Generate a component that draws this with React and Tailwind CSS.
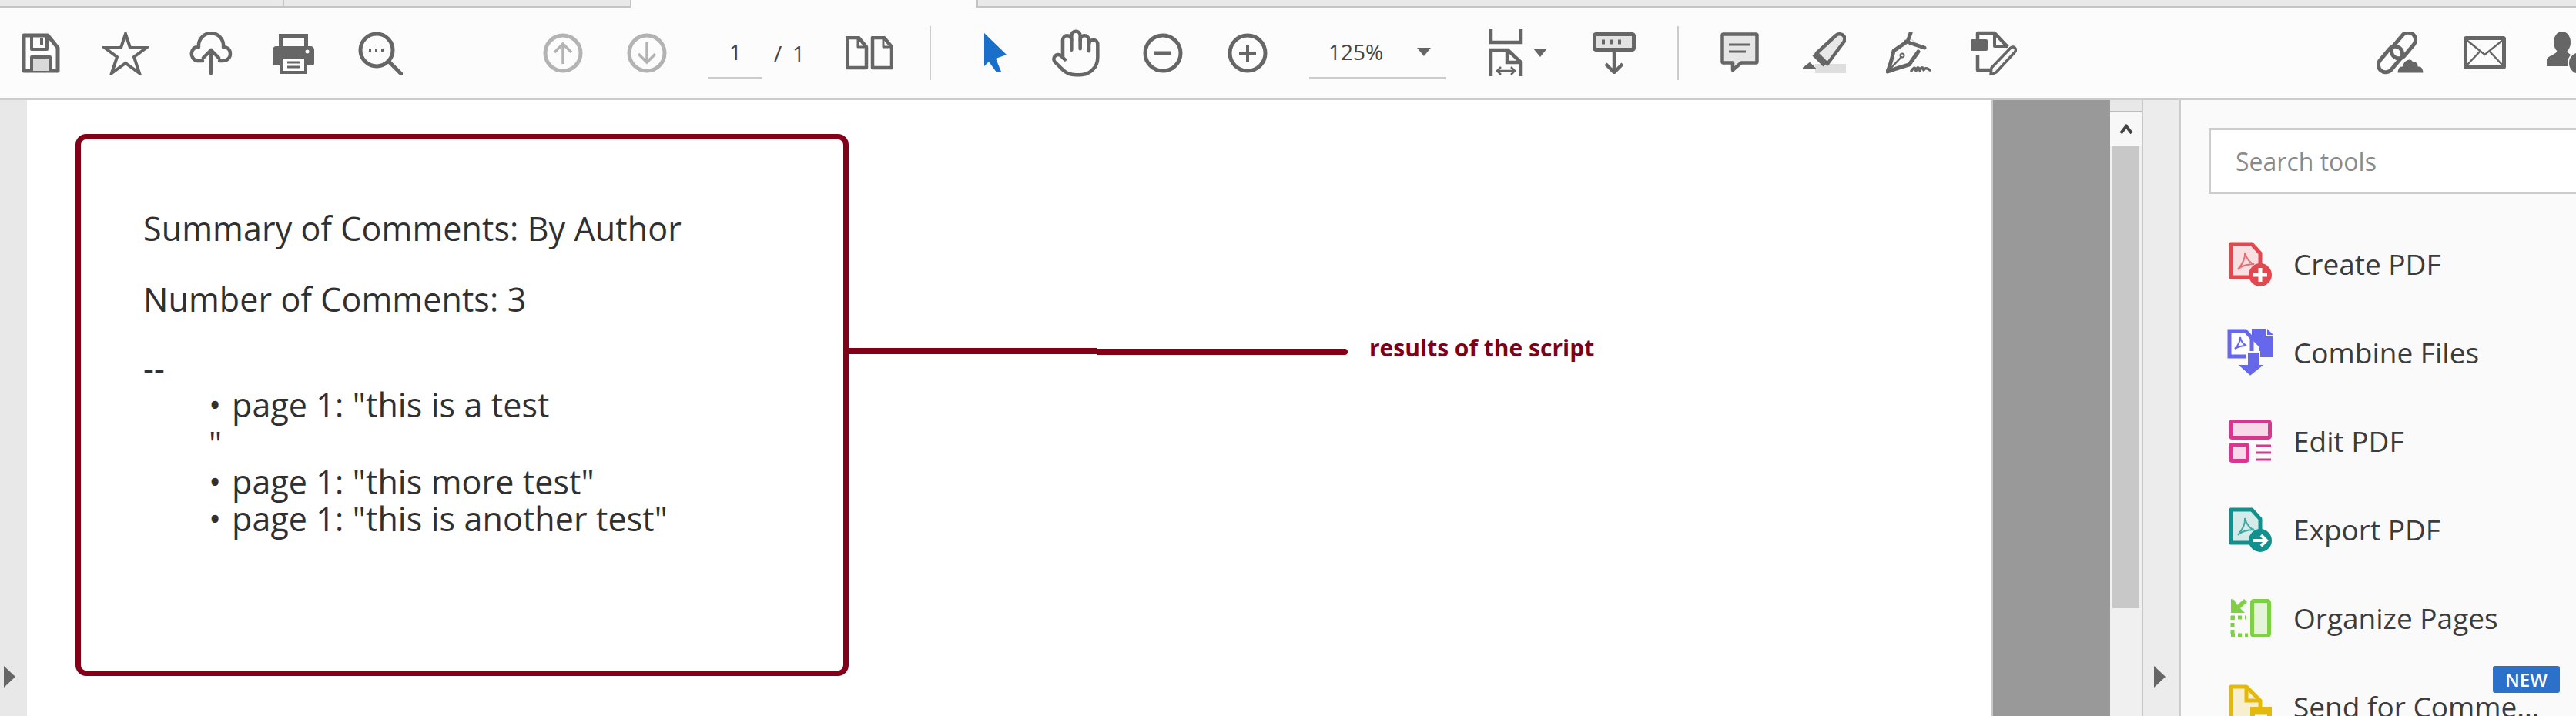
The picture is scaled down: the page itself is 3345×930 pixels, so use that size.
import React from "react";
import { Hand } from "lucide-react";

const GRAY = "#666666";

function SaveIcon({ className }) {
  return (
    <svg className={className} width="50" height="52" viewBox="0 0 50 52" fill="none" stroke={GRAY} strokeWidth="5" strokeLinejoin="round">
      <path d="M3 3H34L47 19V49H3Z" />
      <path d="M13 3V21H33V3" strokeWidth="4" />
      <path d="M26 6V15" strokeWidth="4" />
      <path d="M13 49V31H37V49" fill="#d9d9d9" strokeWidth="4" />
    </svg>
  );
}

function StarIcon({ className }) {
  return (
    <svg className={className} width="60" height="56" viewBox="0 0 60 56" fill="none" stroke={GRAY} strokeWidth="4" strokeLinejoin="miter">
      <path d="M30 3L36 21H57L41 33L48 54L30 41L12 54L19 33L3 21H24Z" />
    </svg>
  );
}

function CloudUpIcon({ className }) {
  return (
    <svg className={className} width="56" height="56" viewBox="0 0 56 56" fill="none" stroke={GRAY} strokeWidth="4.5" strokeLinecap="round" strokeLinejoin="round">
      <path d="M17 38H12C5 38 2 32 3 27C4 22 8 20 12 20C11 10 19 2 28 2C37 2 45 10 44 20C49 20 53 23 53 29C53 34 49 38 43 38H39" />
      <path d="M28 54V24M18 34L28 24L38 34" />
    </svg>
  );
}

function PrintIcon({ className }) {
  return (
    <svg className={className} width="56" height="54" viewBox="0 0 56 54">
      <path d="M9 2H47V18H42V7H14V18H9Z" fill={GRAY} />
      <path d="M6 18H50C53 18 55 20 55 23V40C55 42 54 43 52 43H46V30H10V43H4C2 43 1 42 1 40V23C1 20 3 18 6 18Z" fill={GRAY} />
      <rect x="12" y="32" width="32" height="20" fill="#fff" stroke={GRAY} strokeWidth="4" />
      <path d="M20 39H36M20 45H36" stroke={GRAY} strokeWidth="3" />
      <circle cx="46" cy="25" r="2.5" fill="#fff" />
    </svg>
  );
}

function FindIcon({ className }) {
  return (
    <svg className={className} width="58" height="56" viewBox="0 0 58 56" fill="none" stroke={GRAY}>
      <circle cx="24" cy="24" r="21" strokeWidth="5" />
      <path d="M40 39L56 55" strokeWidth="5" strokeLinecap="round" />
      <path d="M14 24H34" strokeWidth="4" strokeDasharray="3 5" />
    </svg>
  );
}

function ArrowCircle({ className, down }) {
  return (
    <svg className={className} width="52" height="52" viewBox="0 0 52 52" fill="none" stroke="#b3b3b3" strokeWidth="5">
      <circle cx="26" cy="26" r="23" />
      {down ? <path d="M26 12V38M15 27L26 38L37 27" strokeWidth="3.5" /> : <path d="M26 40V14M15 25L26 14L37 25" strokeWidth="3.5" />}
    </svg>
  );
}

function PagesIcon({ className }) {
  const page = (x) => `M${x + 2} 2H${x + 17}L${x + 27} 14V41H${x + 2}Z`;
  return (
    <svg className={className} width="62" height="44" viewBox="0 0 62 44" fill="none" stroke={GRAY} strokeWidth="4.5" strokeLinejoin="round">
      <path d={page(0)} />
      <path d="M16 3V14H27" strokeWidth="3" />
      <path d={page(33)} />
      <path d="M49 3V14H60" strokeWidth="3" />
    </svg>
  );
}

function Separator({ className }) {
  return <div className={`w-[2px] h-[70px] bg-[#cccccc] ${className}`} />;
}

function CursorIcon({ className }) {
  return (
    <svg className={className} width="30" height="52" viewBox="0 0 30 52">
      <path d="M0 0L29 28L15 33L22 50L16 51L6 37L0 43Z" fill="#1a6fcb" />
    </svg>
  );
}

function CircleSign({ className, plus }) {
  return (
    <svg className={className} width="52" height="52" viewBox="0 0 52 52" fill="none" stroke={GRAY} strokeWidth="5">
      <circle cx="26" cy="26" r="23" />
      <path d={plus ? "M15 26H37M26 15V37" : "M15 26H37"} strokeWidth={plus ? 4 : 5} />
    </svg>
  );
}

function FitIcon({ className }) {
  return (
    <svg className={className} width="45" height="61" viewBox="0 0 45 61" fill="none" stroke={GRAY} strokeWidth="4.5">
      <path d="M3 0V17H42V0" />
      <path d="M3 61V27H25L42 43V61" />
      <path d="M24 27V43H42" />
      <path d="M11 54H34M16 49L11 54L16 59M29 49L34 54L29 59" strokeWidth="2.5" />
    </svg>
  );
}

function Caret({ className, w = 18, h = 11 }) {
  return (
    <svg className={className} width={w} height={h} viewBox="0 0 18 11">
      <path d="M0 0H18L9 11Z" fill={GRAY} />
    </svg>
  );
}

function PageOutIcon({ className }) {
  return (
    <svg className={className} width="56" height="54" viewBox="0 0 56 54" fill="none" stroke={GRAY}>
      <rect x="2.5" y="2.5" width="51" height="20" rx="2" fill="#e2e2e2" strokeWidth="5" />
      <path d="M12 12.5H44" strokeWidth="6" strokeDasharray="4 6.5" />
      <path d="M28 26V52M17 41L28 52L39 41" strokeWidth="4.5" />
    </svg>
  );
}

function CommentIcon({ className }) {
  return (
    <svg className={className} width="50" height="53" viewBox="0 0 50 53" fill="none" stroke={GRAY} strokeWidth="4.5" strokeLinejoin="round">
      <path d="M4 2.5H46C47 2.5 47.5 3 47.5 4V38C47.5 39 47 39.5 46 39.5H27L16 49V39.5H4C3 39.5 2.5 39 2.5 38V4C2.5 3 3 2.5 4 2.5Z" fill="#e6e6e6" />
      <path d="M11 16H39M11 25H33" strokeWidth="3" />
    </svg>
  );
}

function HighlightIcon({ className }) {
  return (
    <svg className={className} width="56" height="54" viewBox="0 0 56 54" fill="none" stroke={GRAY} strokeLinejoin="round">
      <rect x="16" y="41" width="40" height="12" fill="#dedede" stroke="none" />
      <path d="M18 27L43 4C46 1 52 2 54 6C55 9 54 12 52 14L32 41L18 27Z" fill="#e8e8e8" strokeWidth="4.5" />
      <path d="M15 28L29 42" strokeWidth="7" />
      <path d="M9 40L16 47H0Z" fill={GRAY} stroke={GRAY} strokeWidth="2" />
    </svg>
  );
}

function SignIcon({ className }) {
  return (
    <svg className={className} width="58" height="54" viewBox="0 0 58 54" fill="none" stroke={GRAY} strokeWidth="5" strokeLinejoin="round" strokeLinecap="round">
      <path d="M33 8L51 22L36 18Z" fill="#dedede" stroke="none" />
      <path d="M32 1L28 12M26 12L50 20" strokeWidth="5" />
      <path d="M26 13L10 24C8 33 6 42 2 51C11 48 22 44 30 42L42 25" fill="#fafafa" />
      <path d="M3 50L20 32" strokeWidth="2.5" />
      <circle cx="21" cy="30" r="2.5" strokeWidth="2" />
      <path d="M33 50C37 44 38 46 39 50C41 44 43 45 44 50C46 44 48 45 49 49C51 45 54 47 57 49" strokeWidth="3.5" />
    </svg>
  );
}

function DocPenIcon({ className }) {
  return (
    <svg className={className} width="60" height="58" viewBox="0 0 60 58" fill="none" stroke={GRAY} strokeWidth="4.5" strokeLinejoin="round">
      <path d="M9 15V3H31L48 21" />
      <path d="M31 3V20H48" strokeWidth="4" />
      <rect x="0" y="11" width="22" height="15" rx="2" fill={GRAY} stroke="none" />
      <path d="M9 32V51H27" />
      <path d="M27 48L52 22C54 20 57 21 58 23C59 25 59 26 57 28L33 54L26 57Z" fill="#fafafa" strokeWidth="3.5" />
    </svg>
  );
}

function LinkCloudIcon({ className }) {
  return (
    <svg className={className} width="62" height="56" viewBox="0 0 62 56" fill="none" stroke={GRAY} strokeWidth="5">
      <rect x="-19" y="-9.5" width="38" height="19" rx="9.5" transform="translate(34 18) rotate(-50)" />
      <rect x="-19" y="-9.5" width="38" height="19" rx="9.5" transform="translate(17 36) rotate(-50)" />
      <path d="M26 55C24 55 25 44 32 44C33 36 43 32 47 38C52 38 54 41 54 44C58 44 61 48 61 55Z" fill={GRAY} stroke="#fcfcfc" strokeWidth="3" />
    </svg>
  );
}

function MailIcon({ className }) {
  return (
    <svg className={className} width="55" height="43" viewBox="0 0 55 43" fill="none" stroke={GRAY}>
      <rect x="2.5" y="2.5" width="50" height="38" rx="1" strokeWidth="5" />
      <path d="M4 5L27.5 24L51 5M4 38L21 20M51 38L34 20" strokeWidth="2.5" />
    </svg>
  );
}

function PersonIcon({ className }) {
  return (
    <svg className={`shrink-0 ${className}`} width="58" height="56" viewBox="0 0 58 56" fill={GRAY}>
      <ellipse cx="20" cy="14" rx="11" ry="14" />
      <path d="M14 24H26C27 30 36 31 38 36V45H0V36C2 31 13 30 14 24Z" />
      <circle cx="43" cy="41" r="15" stroke="#fcfcfc" strokeWidth="2" />
    </svg>
  );
}

function CreateIcon() {
  return (
    <svg width="56" height="58" viewBox="0 0 56 58" fill="none">
      <path d="M3 3H30L41 15V46H3Z" fill="#f8dfe1" stroke="#e34850" strokeWidth="5" strokeLinejoin="round" />
      <path d="M12 36C17 30 22 22 21 14C23 22 28 28 33 29C26 29 18 30 12 36Z" stroke="#e34850" strokeWidth="2" opacity=".75" />
      <circle cx="41" cy="43" r="15" fill="#e34850" />
      <path d="M32 43H50M41 34V52" stroke="#fff" strokeWidth="5" />
    </svg>
  );
}

function CombineIcon() {
  return (
    <svg width="60" height="62" viewBox="0 0 60 62" fill="none">
      <path d="M3 3H24L32 12V36H3Z" fill="#fff" stroke="#6767ec" strokeWidth="5" />
      <path d="M10 26C14 22 17 17 17 11C18 17 21 20 25 22C20 22 15 23 10 26Z" stroke="#6767ec" strokeWidth="2" />
      <path d="M32 0H50V10H60V37H42V24L32 14Z" fill="#6767ec" />
      <path d="M52 0L60 8H52Z" fill="#6767ec" />
      <path d="M32 30H42V46H50L30 62L12 46H26V30Z" fill="#6767ec" stroke="#fafafa" strokeWidth="2" />
    </svg>
  );
}

function EditIcon() {
  return (
    <svg width="56" height="56" viewBox="0 0 56 56" fill="none" stroke="#d83790">
      <rect x="2.5" y="2.5" width="51" height="21" rx="2" fill="#f8d9ea" strokeWidth="5" />
      <rect x="2.5" y="32.5" width="22" height="21" rx="2" fill="#f8d9ea" strokeWidth="5" />
      <path d="M36 34H55M36 43H55M36 52H55" strokeWidth="3" />
    </svg>
  );
}

function ExportIcon() {
  return (
    <svg width="56" height="58" viewBox="0 0 56 58" fill="none">
      <path d="M3 3H30L41 15V46H3Z" fill="#d5ebea" stroke="#12908e" strokeWidth="5" strokeLinejoin="round" />
      <path d="M12 36C17 30 22 22 21 14C23 22 28 28 33 29C26 29 18 30 12 36Z" stroke="#12908e" strokeWidth="2" opacity=".75" />
      <circle cx="41" cy="43" r="15" fill="#12908e" />
      <path d="M32 43H48M42 36L49 43L42 50" stroke="#fff" strokeWidth="4" />
    </svg>
  );
}

function OrganizeIcon() {
  return (
    <svg width="54" height="50" viewBox="0 0 54 50" fill="none" stroke="#7ed044">
      <rect x="29.5" y="2.5" width="22" height="45" rx="2" fill="#e5f3da" strokeWidth="5" />
      <path d="M2 24H22M4 22V48M2 47H24" strokeWidth="5" strokeDasharray="5 4" />
      <path d="M2 0V18H20L14 12L23 4L19 0L10 8L6 1Z" fill="#7ed044" stroke="none" />
    </svg>
  );
}

function SendIcon() {
  return (
    <svg width="56" height="58" viewBox="0 0 56 58" fill="none" stroke="#e3b90f">
      <path d="M3 3H23L41 21V58H3Z" fill="#f6efd0" strokeWidth="5" strokeLinejoin="round" />
      <path d="M23 3V21H41" strokeWidth="5" />
      <rect x="28" y="29" width="28" height="29" fill="#e3b90f" stroke="none" />
      <path d="M34 41H50" stroke="#fff" strokeWidth="3" />
    </svg>
  );
}

function ToolRow({ icon, label, badge }) {
  return (
    <div className="relative flex items-center h-[115px] pl-[24px] shrink-0">
      <div className="w-[60px] flex justify-center">{icon}</div>
      <span className="ml-[26px] text-[37px] leading-[37px] text-[#3c3c3c] whitespace-nowrap">{label}</span>
      {badge && (
        <span className="absolute left-[369px] top-[5px] w-[87px] h-[35px] rounded-[3px] bg-[#2b70c9] text-white text-[24px] font-semibold flex items-center justify-center">
          {badge}
        </span>
      )}
    </div>
  );
}

function SideArrow({ className }) {
  return (
    <svg className={className} width="15" height="28" viewBox="0 0 15 28">
      <path d="M0 0L15 14L0 28Z" fill={GRAY} />
    </svg>
  );
}

export default function App() {
  return (
    <div className="w-[3345px] h-[930px] overflow-hidden flex flex-col bg-white font-['Open_Sans',sans-serif]">
      {/* browser tabs */}
      <div className="h-[10px] flex shrink-0">
        <div className="w-[369px] bg-[#e9e9e9] border-b-2 border-[#c4c4c4] border-r-2" />
        <div className="w-[451px] bg-[#e9e9e9] border-b-2 border-[#c4c4c4] border-r-2" />
        <div className="w-[448px] bg-[#fcfcfc]" />
        <div className="flex-1 bg-[#e9e9e9] border-b-2 border-l-2 border-[#c4c4c4]" />
      </div>

      {/* toolbar */}
      <div className="h-[120px] shrink-0 flex items-center bg-[#fcfcfc] border-b-[3px] border-[#cccccc] overflow-hidden">
        <SaveIcon className="ml-[28px] shrink-0" />
        <StarIcon className="ml-[55px] shrink-0" />
        <CloudUpIcon className="ml-[53px] shrink-0" />
        <PrintIcon className="ml-[51px] shrink-0" />
        <FindIcon className="ml-[56px] shrink-0" />
        <ArrowCircle className="ml-[182px] shrink-0" />
        <ArrowCircle className="ml-[57px] shrink-0" down />
        <div className="ml-[54px] w-[70px] h-[68px] shrink-0 flex items-center justify-center border-b-[3px] border-[#cccccc] text-[28px] text-[#444]">1</div>
        <div className="ml-[15px] w-[40px] shrink-0 flex justify-between text-[28px] text-[#444]">
          <span>/</span>
          <span>1</span>
        </div>
        <PagesIcon className="ml-[53px] shrink-0" />
        <Separator className="ml-[47px] shrink-0" />
        <CursorIcon className="ml-[69px] shrink-0" />
        <Hand className="ml-[55px] shrink-0" size={68} color={GRAY} strokeWidth={1.6} />
        <CircleSign className="ml-[53px] shrink-0" />
        <CircleSign className="ml-[58px] shrink-0" plus />
        <div className="ml-[54px] w-[178px] h-[68px] shrink-0 flex items-center justify-between pl-[25px] pr-[20px] border-b-[3px] border-[#cccccc] text-[28px] text-[#444]">
          <span>125%</span>
          <Caret />
        </div>
        <FitIcon className="ml-[55px] shrink-0" />
        <Caret className="ml-[13px] shrink-0" />
        <PageOutIcon className="ml-[59px] shrink-0" />
        <Separator className="ml-[54px] shrink-0" />
        <CommentIcon className="ml-[54px] shrink-0" />
        <HighlightIcon className="ml-[57px] shrink-0" />
        <SignIcon className="ml-[52px] shrink-0" />
        <DocPenIcon className="ml-[52px] shrink-0" />
        <LinkCloudIcon className="ml-[468px] shrink-0" />
        <MailIcon className="ml-[50px] shrink-0" />
        <PersonIcon className="ml-[53px]" />
      </div>

      <div className="flex-1 min-h-0 flex">
        {/* left rail */}
        <div className="w-[35px] shrink-0 bg-[#e8e8e8] flex flex-col justify-end pb-[37px] pl-[5px]">
          <SideArrow />
        </div>

        {/* document */}
        <div className="w-[2551px] shrink-0 bg-white pl-[63px] pt-[44px] flex items-start">
          <div className="w-[1004px] h-[704px] shrink-0 border-[7px] border-[#820018] rounded-[14px] pl-[81px] pt-[92px] text-[43px] leading-[48px] tracking-[0.1px] text-[#303030]">
            <p>Summary of Comments: By Author</p>
            <p className="mt-[44px]">Number of Comments: 3</p>
            <p className="mt-[41px]">--</p>
            <div className="pl-[85px]">
              <div className="flex"><span className="w-[30px]">•</span><span>page 1: "this is a test</span></div>
              <div className="mt-[2px]">"</div>
              <div className="flex mt-[2px]"><span className="w-[30px]">•</span><span>page 1: "this more test"</span></div>
              <div className="flex"><span className="w-[30px]">•</span><span>page 1: "this is another test"</span></div>
            </div>
          </div>
          <div className="flex items-start mt-[278px] shrink-0">
            <div className="w-[322px] h-[8px] bg-[#820018]" />
            <div className="w-[326px] h-[8px] mt-px bg-[#820018] rounded-r-full" />
            <span className="ml-[28px] -mt-[20px] text-[30px] leading-[40px] font-bold text-[#7d0018] whitespace-nowrap">results of the script</span>
          </div>
        </div>

        {/* gray gutter */}
        <div className="w-[154px] shrink-0 bg-[#999999] border-l-2 border-[#c8c8c8]" />

        {/* scrollbar */}
        <div className="w-[43px] shrink-0 flex flex-col bg-[#f0f0f0] border-r-2 border-[#c8c8c8]">
          <div className="h-[16px] bg-[#e8e8e8] border-b-2 border-[#bdbdbd]" />
          <div className="h-[44px] flex items-center justify-center bg-[#f7f7f7]">
            <svg width="18" height="14" viewBox="0 0 18 14" fill="none">
              <path d="M2 12L9 3L16 12" stroke="#444" strokeWidth="4" />
            </svg>
          </div>
          <div className="mx-[3px] h-[600px] bg-[#c8c8c8]" />
        </div>

        {/* tool pane collapse strip */}
        <div className="w-[49px] shrink-0 bg-[#ececec] border-r-[3px] border-[#cccccc] flex flex-col justify-end pb-[37px] pl-[14px]">
          <SideArrow />
        </div>

        {/* tools pane */}
        <div className="flex-1 min-w-0 bg-[#fafafa] pl-[36px] pt-[36px] flex flex-col overflow-hidden">
          <div className="w-[600px] h-[86px] shrink-0 bg-white border-[3px] border-[#cccccc] flex items-center pl-[32px] pt-[2px] text-[32px] text-[#8a8a8a]">
            Search tools
          </div>
          <div className="h-[33px] shrink-0" />
          <ToolRow icon={<CreateIcon />} label="Create PDF" />
          <ToolRow icon={<CombineIcon />} label="Combine Files" />
          <ToolRow icon={<EditIcon />} label="Edit PDF" />
          <ToolRow icon={<ExportIcon />} label="Export PDF" />
          <ToolRow icon={<OrganizeIcon />} label="Organize Pages" />
          <ToolRow icon={<SendIcon />} label="Send for Comme..." badge="NEW" />
        </div>
      </div>
    </div>
  );
}
